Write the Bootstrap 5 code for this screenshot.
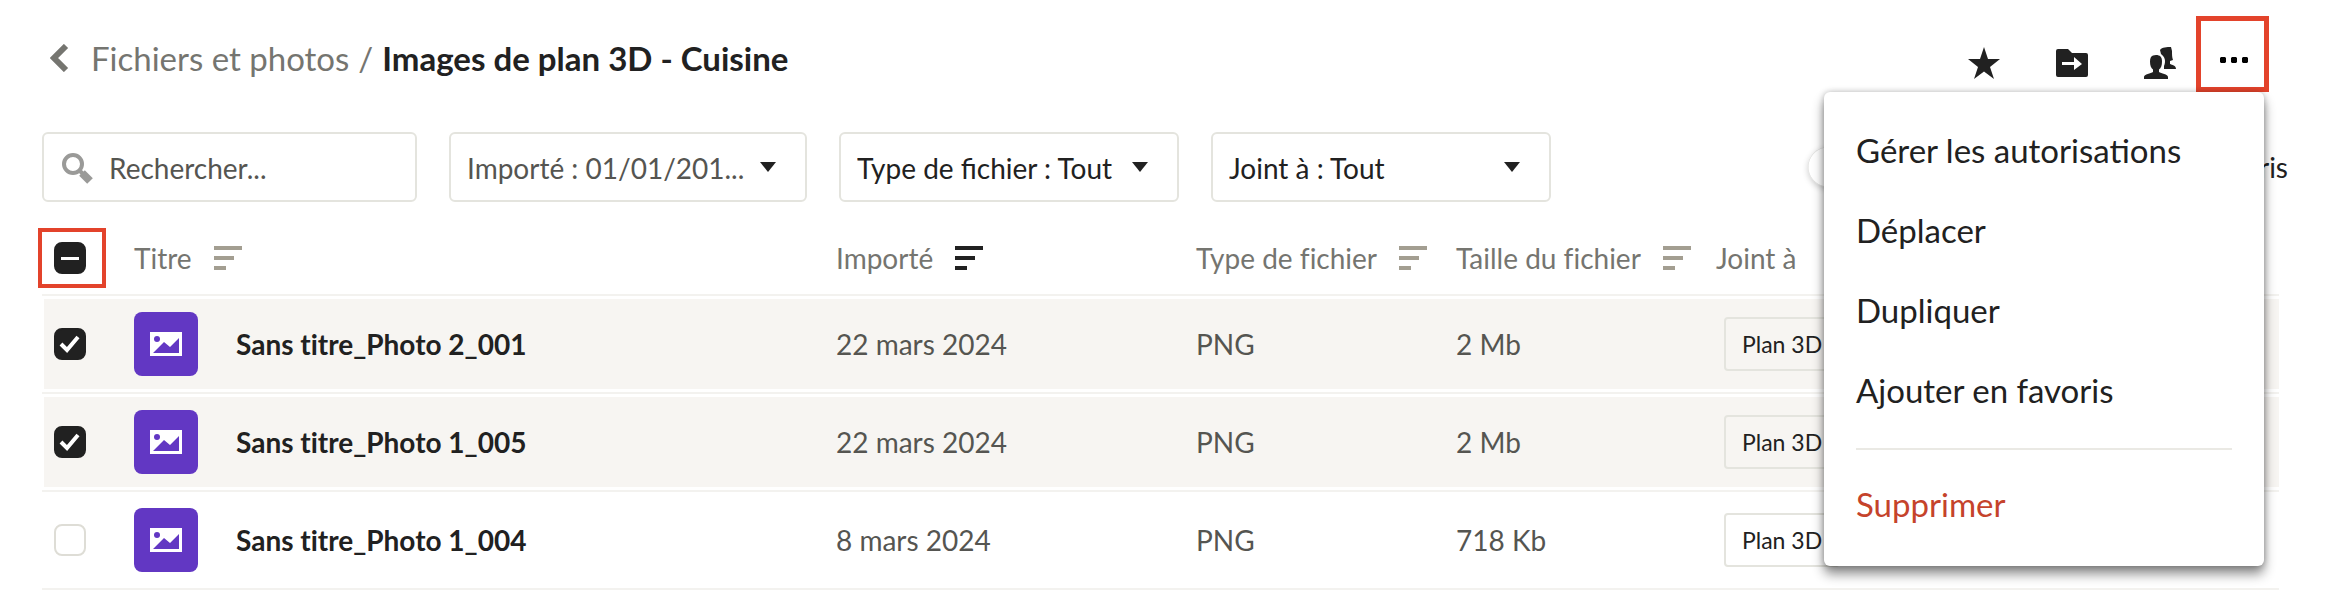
<!DOCTYPE html>
<html lang="fr">
<head>
<meta charset="utf-8">
<meta name="viewport" content="width=device-width, initial-scale=1">
<title>Images de plan 3D - Cuisine</title>
<link href="https://cdn.jsdelivr.net/npm/bootstrap@5.3.0/dist/css/bootstrap.min.css" rel="stylesheet">
<style>
  :root { --ink: #212121; --muted: #757570; --soft: #555551; --line: #e4e4de; --rule: #f3f2ef; --accent: #e3432b; --tint: #f7f5f2; }
  body { font-family: Lato, "Liberation Sans", sans-serif; font-variant-ligatures: none; font-size: 28px; line-height: 40px; color: var(--ink); background: #fff; }
  .page { padding: 16px 42px 0; }
  .topbar { margin-right: 19px; }
  .crumbs { font-size: 33px; gap: 9px; padding: 8px 0 0 8px; }
  .crumbs a { color: var(--muted); text-decoration: none; }
  .crumbs .back { margin-right: 12px; }
  .crumbs .divider { color: var(--muted); }
  .crumbs .current { font-weight: 700; }
  .tool { border: 0; background: none; padding: 0; display: flex; color: var(--ink); }
  .tools { gap: 56px; padding-top: 18px; margin-right: 20px; }
  .more-btn { width: 73px; height: 76px; border: 5px solid var(--accent); background: #fff; padding: 12px 0 0 2px; display: flex; align-items: center; justify-content: center; }
  .actions-menu { position: absolute; top: 100%; right: 5px; width: 440px; padding: 18px 0 22px; border: 0; border-radius: 6px; box-shadow: 0 8px 12px rgba(0,0,0,.45), 0 0 6px rgba(0,0,0,.25); font-size: 33px; z-index: 10; }
  .actions-menu .dropdown-item { padding: 20px 32px; line-height: 40px; color: var(--ink); }
  .actions-menu .dropdown-item.danger { color: #c5432b; }
  .actions-menu hr { margin: 18px 32px 14px; border-top: 2px solid #eae9e4; opacity: 1; }
  .filters { margin-top: 40px; gap: 32px; }
  .filters .form-control, .filters .form-select { height: 70px; border: 2px solid var(--line); border-radius: 6px; font-size: 28px; line-height: 40px; color: var(--ink); padding-top: 14px; padding-bottom: 12px; }
  .filters .form-select { width: 340px; padding-left: 16px; padding-right: 50px;
    background: #fff url("data:image/svg+xml,%3Csvg xmlns='http://www.w3.org/2000/svg' viewBox='0 0 16 10'%3E%3Cpath fill='%23212121' d='M0 0h16L8 10z'/%3E%3C/svg%3E") no-repeat right 29px center / 16px 10px; }
  .filters .form-select.dates { width: 358px; color: var(--soft); }
  .search { position: relative; width: 375px; }
  .search svg { position: absolute; left: 20px; top: 21px; }
  .search .form-control { padding-left: 65px; }
  .search .form-control::placeholder { color: var(--soft); opacity: 1; }
  .fav { gap: 16px; width: 480px; margin-left: auto; }
  .fav .form-check-input { width: 72px; height: 40px; margin: 0; border: 0; appearance: none; border-radius: 20px; background: radial-gradient(circle at 20px 20px, #fff 19px, #d8d8d6 20px, transparent 21px); box-shadow: 0 2px 6px rgba(0,0,0,.2); }
  .files { table-layout: fixed; border-collapse: separate; border-spacing: 0; width: calc(100% - 9px); margin: 0; color: var(--soft); }
  .files > :not(caption) > * > * { padding: 0; border-bottom: 2px solid var(--rule); background-color: transparent; color: inherit; box-shadow: none; vertical-align: middle; }
  .files th { height: 94px; padding-top: 20px !important; font-weight: 400; color: var(--muted) !important; }
  .files td { height: 98px; }
  .files tr.picked td { background: linear-gradient(var(--tint), var(--tint)) 0 3px / 100% calc(100% - 6px) no-repeat; }
  .files tr.picked td:first-child { background-position: 2px 3px; }
  .files .heading { display: flex; align-items: center; gap: 22px; white-space: nowrap; }
  .files .sort { border: 0; background: none; padding: 0; display: flex; color: #a39e91; }
  .files .sort.active { color: var(--ink); }
  .files .name { color: var(--ink); font-weight: 700; gap: 38px; }
  .files .form-check-input { width: 32px; height: 32px; margin: 0 0 0 12px; float: none; display: block; border: 2px solid #deddd6; border-radius: 8px; }
  .files .form-check-input:checked, .files .form-check-input:indeterminate { background-color: var(--ink); border-color: var(--ink); }
  .files .form-check-input:checked { background-image: url("data:image/svg+xml,%3Csvg xmlns='http://www.w3.org/2000/svg' viewBox='0 0 28 28'%3E%3Cpath fill='none' stroke='%23fff' stroke-width='4' d='M5 14l6 6L22 7'/%3E%3C/svg%3E"); }
  .files .form-check-input:indeterminate { background-image: url("data:image/svg+xml,%3Csvg xmlns='http://www.w3.org/2000/svg' viewBox='0 0 28 28'%3E%3Cpath fill='%23fff' d='M5 13h18v3H5z'/%3E%3C/svg%3E"); }
  .select-all { display: flex; align-items: center; width: 60px; height: 52px; outline: 4px solid var(--accent); }
  .thumb { width: 64px; height: 64px; border-radius: 8px; background: #6237c3; display: flex; align-items: center; justify-content: center; }
  .chip { display: inline-block; margin-left: 8px; border: 2px solid var(--line); border-radius: 4px; padding: 7px 16px; font-size: 23px; line-height: 36px; color: var(--ink); text-decoration: none; vertical-align: middle; }
</style>
</head>
<body>
<svg class="d-none" aria-hidden="true">
  <symbol id="sort" viewBox="0 0 28 24"><path fill="currentColor" d="M0 0h28v4H0zM0 10h20v4H0zM0 20h12v4H0z"/></symbol>
  <symbol id="picture" viewBox="0 0 32 24"><path fill="#fff" d="M0 0h32v24H0z"/><circle cx="7" cy="7" r="3" fill="#6237c3"/><path fill="#6237c3" d="M3 21L14 10l6 5 9-9v15z"/></symbol>
</svg>
<div class="page">
  <header class="topbar d-flex align-items-center">
    <nav class="crumbs d-flex align-items-center me-auto" aria-label="Fil d'Ariane">
      <a href="#" aria-label="Retour" class="back d-flex"><svg width="20" height="28" viewBox="0 0 20 28"><path d="M16 2L4 14l12 12" fill="none" stroke="#757570" stroke-width="6"/></svg></a>
      <a href="#">Fichiers et photos</a>
      <span class="divider">/</span>
      <span class="current">Images de plan 3D - Cuisine</span>
    </nav>
    <div class="tools d-flex">
      <button class="tool" type="button" aria-label="Favori"><svg width="32" height="32" viewBox="0 0 32 32"><path fill="currentColor" d="M16 0l4 12h12l-10 8 4 12-10-7.500L6 32l4-12L0 12h12z"/></svg></button>
      <button class="tool" type="button" aria-label="Déplacer"><svg width="32" height="32" viewBox="0 0 32 32"><path fill="currentColor" d="M2 2h10l4 4h14q2 0 2 2v20q0 2-2 2H2q-2 0-2-2V4q0-2 2-2z"/><path fill="#fff" d="M6 15h12v-5l8 7-8 6v-5H6z"/></svg></button>
      <button class="tool" type="button" aria-label="Partager"><svg width="32" height="32" viewBox="0 0 32 32"><path fill="currentColor" d="M12 8c4 0 6 2 6 6.500 0 4-1 6.500-3 8v2.500c2 1.500 9 2 9 5v2H0v-2c0-3 7-3.500 9-5v-2.500c-2-1.500-3-4-3-8C6 11 7 9 9 8.500zM16 3c2-3 7-3 11-3l1 4c0 4 0 6 1 9l-3 1v3c2 1 6 1 6 5H20v-3c2-5 1-9-3-12z"/></svg></button>
    </div>
    <div class="position-relative">
      <button class="more-btn" type="button" aria-label="Plus d'actions" aria-expanded="true"><svg width="28" height="6" viewBox="0 0 28 6"><path d="M1 0h4l1 1v4L5 6H1L0 5V1zM12 0h4l1 1v4l-1 1h-4l-1-1V1zM23 0h4l1 1v4l-1 1h-4l-1-1V1z"/></svg></button>
      <div class="dropdown-menu show actions-menu">
        <button class="dropdown-item" type="button">Gérer les autorisations</button>
        <button class="dropdown-item" type="button">Déplacer</button>
        <button class="dropdown-item" type="button">Dupliquer</button>
        <button class="dropdown-item" type="button">Ajouter en favoris</button>
        <hr>
        <button class="dropdown-item danger" type="button">Supprimer</button>
      </div>
    </div>
  </header>

  <form class="filters d-flex align-items-center">
    <div class="search">
      <svg width="32" height="32" viewBox="0 0 32 32"><circle cx="11" cy="11" r="9" fill="none" stroke="#9a9a98" stroke-width="4"/><path stroke="#9a9a98" stroke-width="4" d="M17 17l5 5"/><path stroke="#9a9a98" stroke-width="8" d="M20 20l8 8"/></svg>
      <input class="form-control" type="text" placeholder="Rechercher..." aria-label="Rechercher">
    </div>
    <select class="form-select dates" aria-label="Date d'importation"><option>Importé : 01/01/201...</option></select>
    <select class="form-select" aria-label="Type de fichier"><option>Type de fichier : Tout</option></select>
    <select class="form-select" aria-label="Joint à"><option>Joint à : Tout</option></select>
    <div class="fav d-flex align-items-center justify-content-between">
      <input class="form-check-input" type="checkbox" role="switch" id="fav">
      <label for="fav">Favoris</label>
    </div>
  </form>

  <table class="table files">
    <colgroup><col style="width:92px"><col><col style="width:360px"><col style="width:260px"><col style="width:260px"><col style="width:563px"></colgroup>
    <thead>
      <tr>
        <th><label class="select-all"><input class="form-check-input" type="checkbox" id="all" aria-label="Tout sélectionner"></label></th>
        <th><span class="heading">Titre <button class="sort" type="button" aria-label="Trier par titre"><svg width="28" height="24"><use href="#sort"/></svg></button></span></th>
        <th><span class="heading">Importé <button class="sort active" type="button" aria-label="Trier par date"><svg width="28" height="24"><use href="#sort"/></svg></button></span></th>
        <th><span class="heading">Type de fichier <button class="sort" type="button" aria-label="Trier par type"><svg width="28" height="24"><use href="#sort"/></svg></button></span></th>
        <th><span class="heading">Taille du fichier <button class="sort" type="button" aria-label="Trier par taille"><svg width="28" height="24"><use href="#sort"/></svg></button></span></th>
        <th>Joint à</th>
      </tr>
    </thead>
    <tbody>
      <tr class="picked">
        <td><input class="form-check-input" type="checkbox" checked aria-label="Sans titre_Photo 2_001"></td>
        <td><div class="name d-flex align-items-center"><span class="thumb"><svg width="32" height="24"><use href="#picture"/></svg></span>Sans titre_Photo 2_001</div></td>
        <td>22 mars 2024</td><td>PNG</td><td>2 Mb</td><td><a class="chip" href="#">Plan 3D</a></td>
      </tr>
      <tr class="picked">
        <td><input class="form-check-input" type="checkbox" checked aria-label="Sans titre_Photo 1_005"></td>
        <td><div class="name d-flex align-items-center"><span class="thumb"><svg width="32" height="24"><use href="#picture"/></svg></span>Sans titre_Photo 1_005</div></td>
        <td>22 mars 2024</td><td>PNG</td><td>2 Mb</td><td><a class="chip" href="#">Plan 3D</a></td>
      </tr>
      <tr>
        <td><input class="form-check-input" type="checkbox" aria-label="Sans titre_Photo 1_004"></td>
        <td><div class="name d-flex align-items-center"><span class="thumb"><svg width="32" height="24"><use href="#picture"/></svg></span>Sans titre_Photo 1_004</div></td>
        <td>8 mars 2024</td><td>PNG</td><td>718 Kb</td><td><a class="chip" href="#">Plan 3D</a></td>
      </tr>
    </tbody>
  </table>
</div>
<script src="https://cdn.jsdelivr.net/npm/bootstrap@5.3.0/dist/js/bootstrap.bundle.min.js"></script>
<script>document.getElementById('all').indeterminate = true;</script>
</body>
</html>
